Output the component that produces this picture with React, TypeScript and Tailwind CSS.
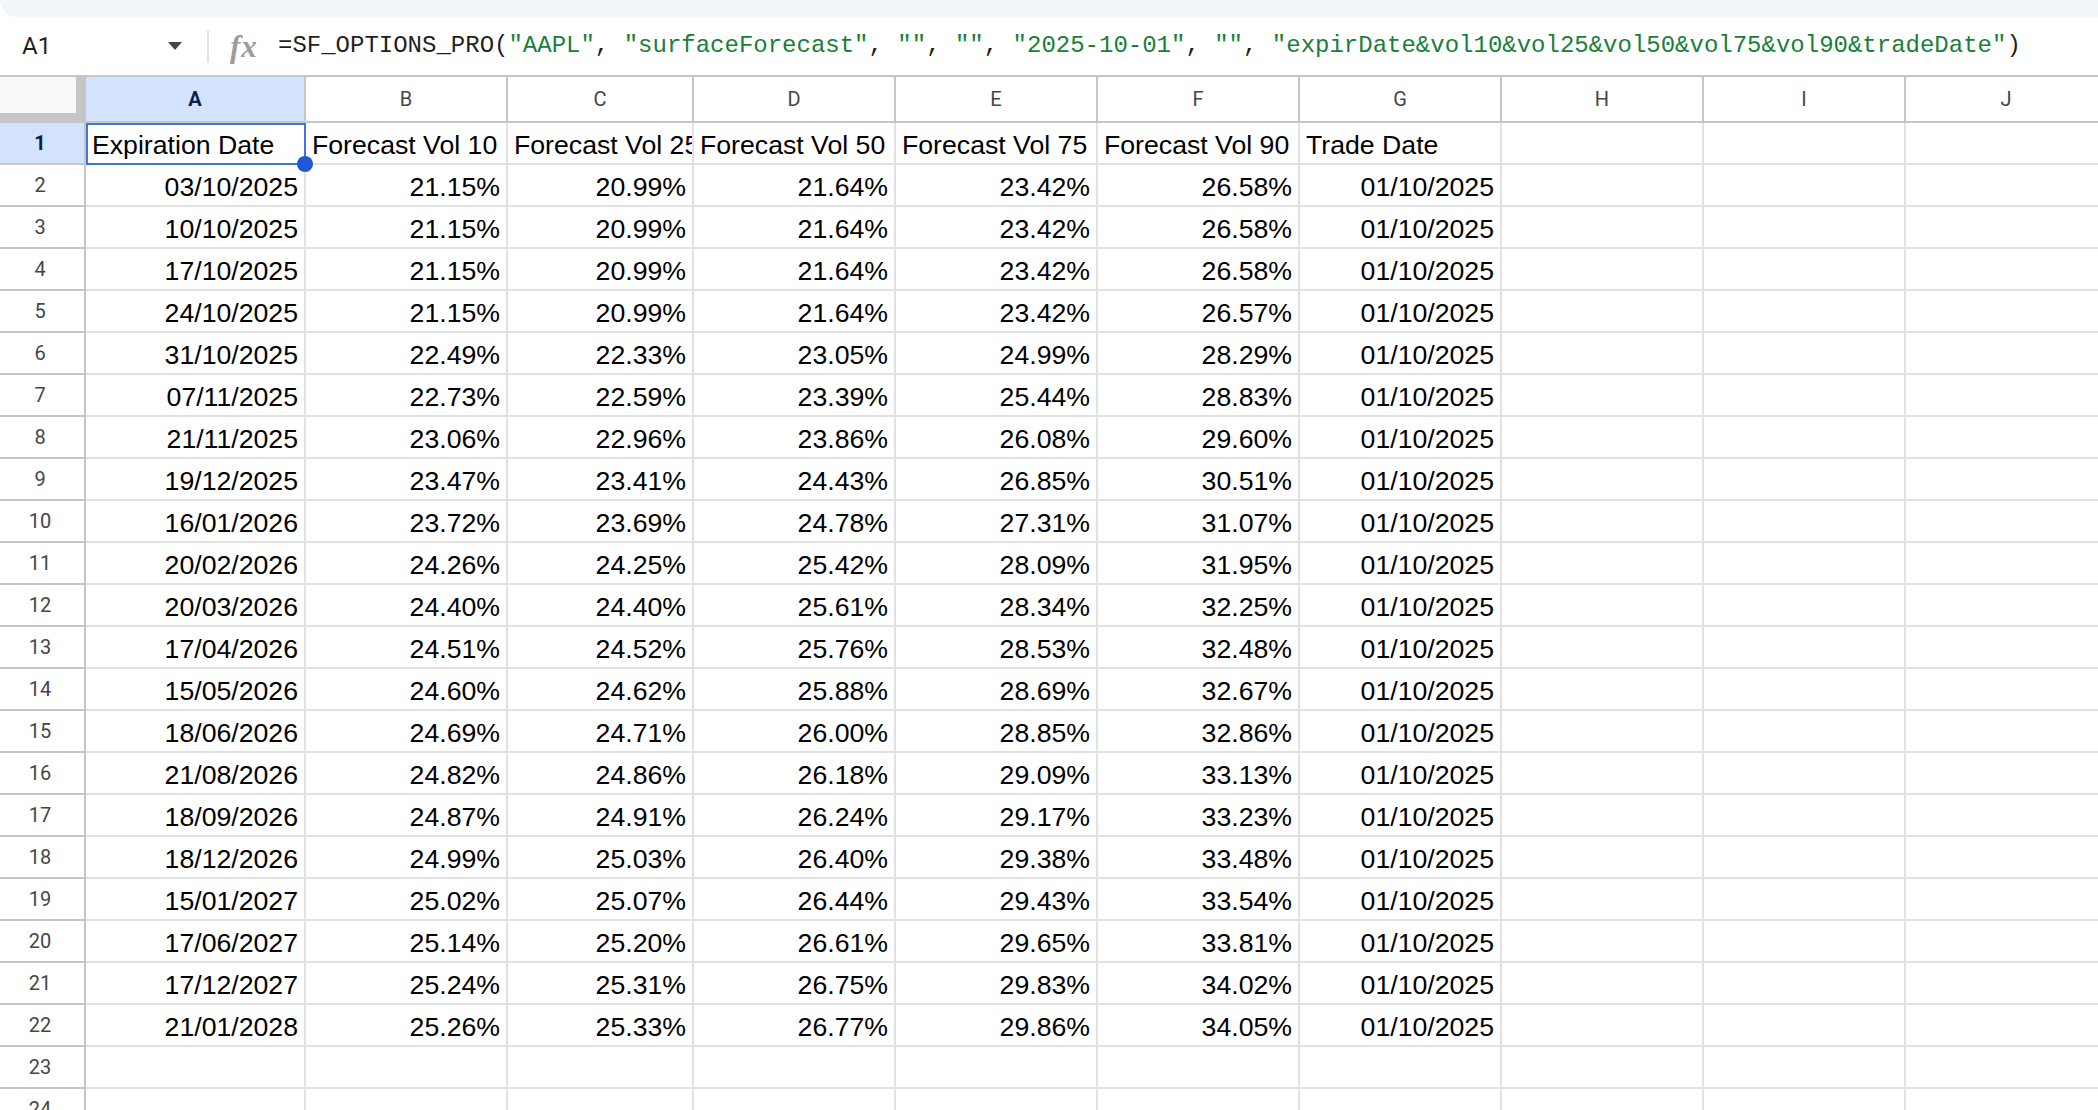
import React from "react";

const COLS = [
  { key: "A", w: "w-[220px]" },
  { key: "B", w: "w-[202px]" },
  { key: "C", w: "w-[186px]" },
  { key: "D", w: "w-[202px]" },
  { key: "E", w: "w-[202px]" },
  { key: "F", w: "w-[202px]" },
  { key: "G", w: "w-[202px]" },
  { key: "H", w: "w-[202px]" },
  { key: "I", w: "w-[202px]" },
  { key: "J", w: "w-[202px]" },
];

const HEADERS = [
  "Expiration Date",
  "Forecast Vol 10",
  "Forecast Vol 25",
  "Forecast Vol 50",
  "Forecast Vol 75",
  "Forecast Vol 90",
  "Trade Date",
];

// expiry, vol10, vol25, vol50, vol75, vol90
const ROWS: string[][] = [
  ["03/10/2025", "21.15%", "20.99%", "21.64%", "23.42%", "26.58%"],
  ["10/10/2025", "21.15%", "20.99%", "21.64%", "23.42%", "26.58%"],
  ["17/10/2025", "21.15%", "20.99%", "21.64%", "23.42%", "26.58%"],
  ["24/10/2025", "21.15%", "20.99%", "21.64%", "23.42%", "26.57%"],
  ["31/10/2025", "22.49%", "22.33%", "23.05%", "24.99%", "28.29%"],
  ["07/11/2025", "22.73%", "22.59%", "23.39%", "25.44%", "28.83%"],
  ["21/11/2025", "23.06%", "22.96%", "23.86%", "26.08%", "29.60%"],
  ["19/12/2025", "23.47%", "23.41%", "24.43%", "26.85%", "30.51%"],
  ["16/01/2026", "23.72%", "23.69%", "24.78%", "27.31%", "31.07%"],
  ["20/02/2026", "24.26%", "24.25%", "25.42%", "28.09%", "31.95%"],
  ["20/03/2026", "24.40%", "24.40%", "25.61%", "28.34%", "32.25%"],
  ["17/04/2026", "24.51%", "24.52%", "25.76%", "28.53%", "32.48%"],
  ["15/05/2026", "24.60%", "24.62%", "25.88%", "28.69%", "32.67%"],
  ["18/06/2026", "24.69%", "24.71%", "26.00%", "28.85%", "32.86%"],
  ["21/08/2026", "24.82%", "24.86%", "26.18%", "29.09%", "33.13%"],
  ["18/09/2026", "24.87%", "24.91%", "26.24%", "29.17%", "33.23%"],
  ["18/12/2026", "24.99%", "25.03%", "26.40%", "29.38%", "33.48%"],
  ["15/01/2027", "25.02%", "25.07%", "26.44%", "29.43%", "33.54%"],
  ["17/06/2027", "25.14%", "25.20%", "26.61%", "29.65%", "33.81%"],
  ["17/12/2027", "25.24%", "25.31%", "26.75%", "29.83%", "34.02%"],
  ["21/01/2028", "25.26%", "25.33%", "26.77%", "29.86%", "34.05%"],
];

const TRADE_DATE = "01/10/2025";

const Str = ({ children }: { children: React.ReactNode }) => (
  <span className="text-[#188038]">{children}</span>
);

function FormulaBar() {
  return (
    <div className="flex items-center h-[58px] shrink-0">
      <div className="w-[207px] shrink-0 flex items-center justify-between pl-[22px] pr-[25px]">
        <span className="font-['Roboto',sans-serif] text-[24px] text-[#1f1f1f] leading-none">A1</span>
        <svg width="14" height="8" viewBox="0 0 14 8">
          <polygon points="0,0 14,0 7,8" fill="#444746" />
        </svg>
      </div>
      <div className="w-[2px] h-[33px] bg-[#e3e3e3] shrink-0" />
      <span className="ml-[21px] w-[36px] shrink-0 font-['Liberation_Serif',serif] italic font-semibold text-[31px] leading-none text-[#9c9c9c] tracking-[1px]">
        fx
      </span>
      <div className="ml-[12px] whitespace-nowrap font-['Liberation_Mono',monospace] text-[24px] leading-none text-[#1f1f1f]">
        =SF_OPTIONS_PRO(<Str>"AAPL"</Str>, <Str>"surfaceForecast"</Str>, <Str>""</Str>, <Str>""</Str>,{" "}
        <Str>"2025-10-01"</Str>, <Str>""</Str>, <Str>"expirDate&amp;vol10&amp;vol25&amp;vol50&amp;vol75&amp;vol90&amp;tradeDate"</Str>)
      </div>
    </div>
  );
}

function ColumnHeaders() {
  return (
    <div className="flex h-[48px] shrink-0 border-y-2 border-[#c4c7c5] font-['Roboto',sans-serif] text-[20px]">
      <div className="w-[86px] shrink-0 h-full bg-[#c4c7c5]">
        <div className="w-[76px] h-[36px] bg-[#f8f9fa]" />
      </div>
      {COLS.map((c) =>
        c.key === "A" ? (
          <div
            key={c.key}
            className={`${c.w} shrink-0 h-full border-r-2 border-[#c4c7c5] bg-[#d3e3fd] flex items-center justify-center font-bold text-[#0b1f4b]`}
          >
            {c.key}
          </div>
        ) : (
          <div
            key={c.key}
            className={`${c.w} shrink-0 h-full border-r-2 border-[#c4c7c5] flex items-center justify-center text-[#444746]`}
          >
            {c.key}
          </div>
        )
      )}
    </div>
  );
}

function Row({ n, cells }: { n: number; cells: string[] }) {
  const selectedRow = n === 1;
  return (
    <div className="flex h-[42px] shrink-0">
      <div
        className={`w-[86px] shrink-0 h-full border-r-2 border-b-2 border-[#c4c7c5] flex items-center justify-center pr-1 font-['Roboto',sans-serif] text-[20px] ${
          selectedRow ? "bg-[#d3e3fd] font-bold text-[#0b1f4b]" : "text-[#444746]"
        }`}
      >
        {n}
      </div>
      {COLS.map((c, i) => {
        const value = cells[i] ?? "";
        const isLabel = n === 1;
        return (
          <div
            key={c.key}
            className={`${c.w} shrink-0 h-full relative border-r-2 border-b-2 border-[#e1e1e1] flex items-end pb-[3px] px-[6px] overflow-hidden whitespace-nowrap text-[26.67px] leading-[30px] text-black ${
              isLabel ? "justify-start" : "justify-end"
            }`}
          >
            {value}
          </div>
        );
      })}
    </div>
  );
}

export default function App() {
  const body: string[][] = [
    HEADERS,
    ...ROWS.map((r) => [...r, TRADE_DATE]),
    [],
    [],
  ];

  return (
    <div className="w-[2098px] h-[1110px] overflow-hidden bg-white flex flex-col font-['Liberation_Sans',Arial,sans-serif]">
      {/* toolbar edge */}
      <div className="h-[17px] shrink-0 bg-[#f2f5fa] rounded-bl-[30px]" />
      <FormulaBar />
      <ColumnHeaders />
      <div className="relative flex flex-col">
        {body.map((cells, i) => (
          <Row key={i} n={i + 1} cells={cells} />
        ))}
        {/* active cell A1 with fill handle */}
        <div className="absolute left-[86px] top-0 w-[220px] h-[42px] border-2 border-[#3f75dc] z-10 pointer-events-none">
          <div className="absolute -right-[9px] -bottom-[9px] w-[16px] h-[16px] rounded-full bg-[#1f58d6]" />
        </div>
      </div>
    </div>
  );
}
